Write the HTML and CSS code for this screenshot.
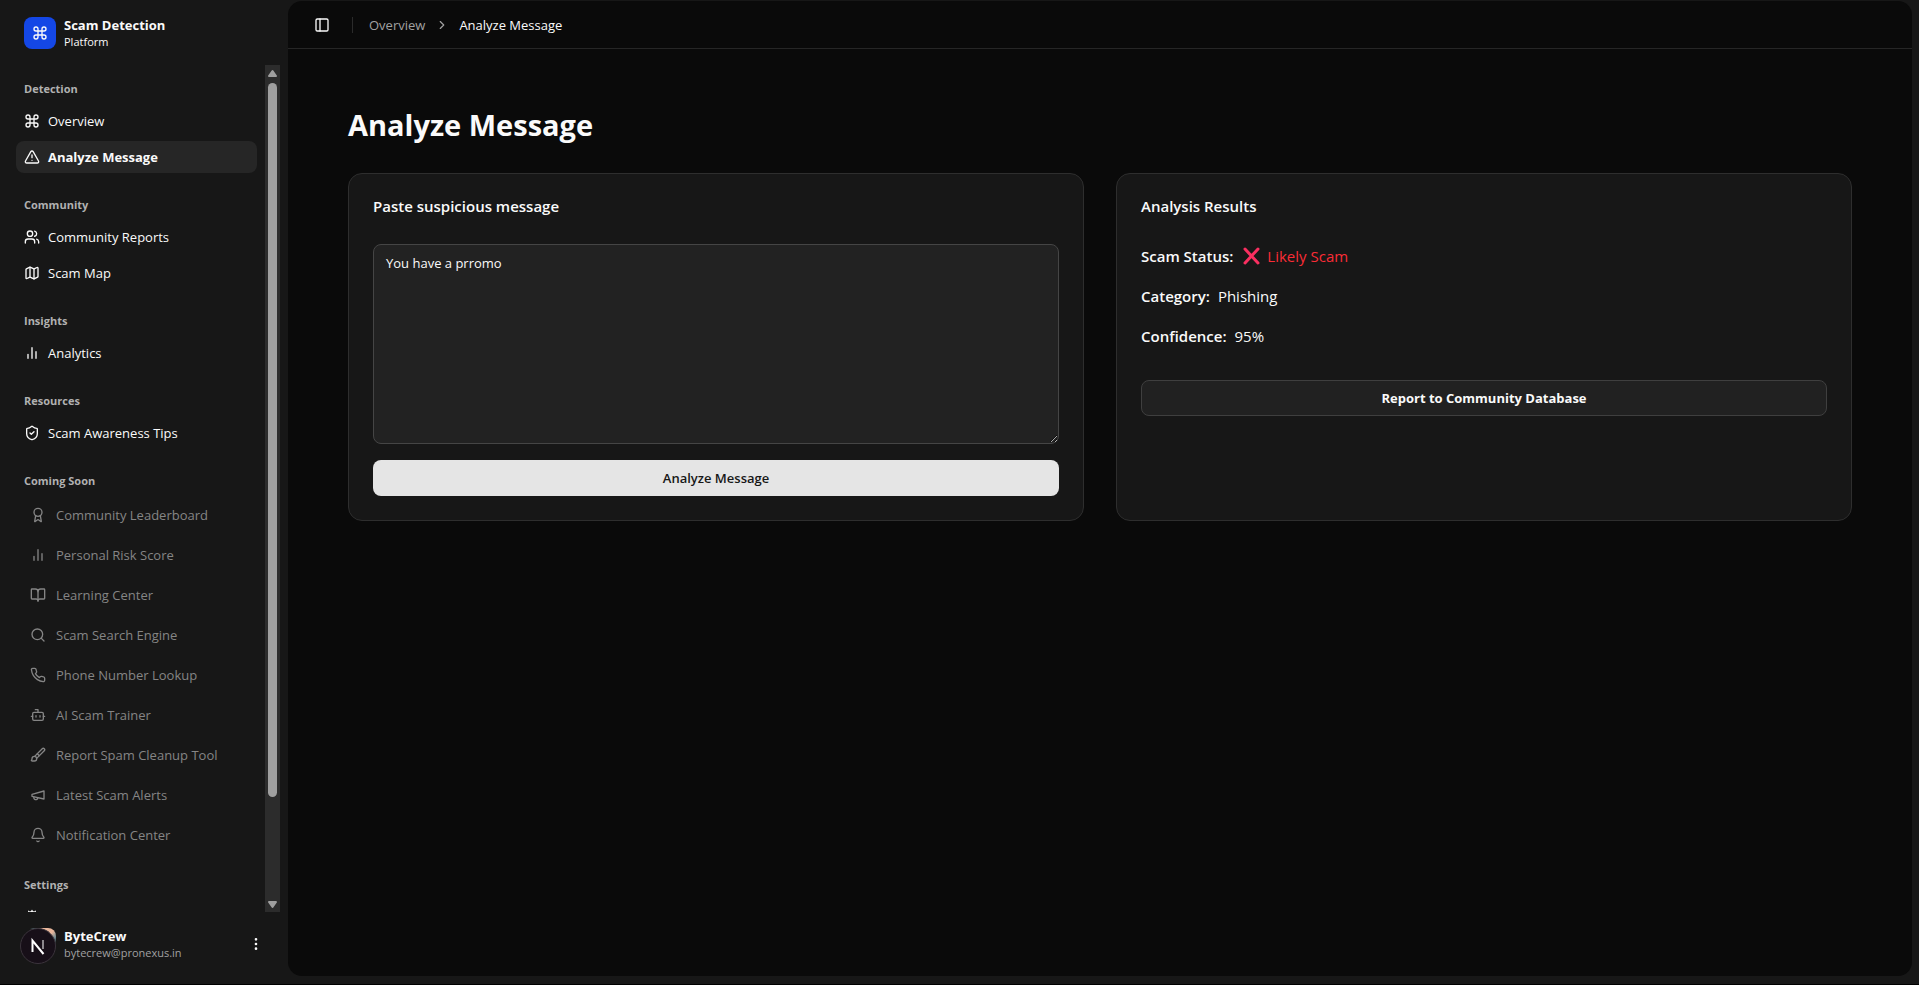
FILE: index.html
```html
<!DOCTYPE html>
<html lang="en">
<head>
<meta charset="utf-8">
<title>Analyze Message - Scam Detection Platform</title>
<link rel="stylesheet" href="styles.css">
</head>
<body>
<svg class="sprite" aria-hidden="true">
  <symbol id="command" viewBox="0 0 24 24"><path d="M15 6v12a3 3 0 1 0 3-3H6a3 3 0 1 0 3 3V6a3 3 0 1 0-3 3h12a3 3 0 1 0-3-3"/></symbol>
  <symbol id="alert" viewBox="0 0 24 24"><path d="m21.73 18-8-14a2 2 0 0 0-3.48 0l-8 14A2 2 0 0 0 4 21h16a2 2 0 0 0 1.73-3"/><path d="M12 9v4M12 17h.01"/></symbol>
  <symbol id="users" viewBox="0 0 24 24"><path d="M16 21v-2a4 4 0 0 0-4-4H6a4 4 0 0 0-4 4v2"/><circle cx="9" cy="7" r="4"/><path d="M22 21v-2a4 4 0 0 0-3-3.870M16 3.130a4 4 0 0 1 0 7.750"/></symbol>
  <symbol id="map" viewBox="0 0 24 24"><path d="M14.106 5.553a2 2 0 0 0 1.788 0l3.659-1.83A1 1 0 0 1 21 4.619v12.764a1 1 0 0 1-.553.894l-4.553 2.277a2 2 0 0 1-1.788 0l-4.212-2.106a2 2 0 0 0-1.788 0l-3.659 1.83A1 1 0 0 1 3 19.381V6.618a1 1 0 0 1 .553-.894l4.553-2.277a2 2 0 0 1 1.788 0z"/><path d="M15 5.764v15M9 3.236v15"/></symbol>
  <symbol id="bars" viewBox="0 0 24 24"><path d="M6 20v-6M12 20V4M18 20v-10"/></symbol>
  <symbol id="shield" viewBox="0 0 24 24"><path d="M20 13c0 5-3.5 7.500-7.660 8.950a1 1 0 0 1-.67-.01C7.500 20.500 4 18 4 13V6a1 1 0 0 1 1-1c2 0 4.500-1.200 6.240-2.720a1.170 1.170 0 0 1 1.520 0C14.510 3.810 17 5 19 5a1 1 0 0 1 1 1z"/><path d="m9 12 2 2 4-4"/></symbol>
  <symbol id="award" viewBox="0 0 24 24"><path d="m15.477 12.890 1.515 8.526a.5.5 0 0 1-.810.470l-3.580-2.687a1 1 0 0 0-1.197 0l-3.586 2.686a.5.5 0 0 1-.810-.469l1.514-8.526"/><circle cx="12" cy="8" r="6"/></symbol>
  <symbol id="book" viewBox="0 0 24 24"><path d="M12 7v14"/><path d="M3 18a1 1 0 0 1-1-1V4a1 1 0 0 1 1-1h5a4 4 0 0 1 4 4 4 4 0 0 1 4-4h5a1 1 0 0 1 1 1v13a1 1 0 0 1-1 1h-6a3 3 0 0 0-3 3 3 3 0 0 0-3-3z"/></symbol>
  <symbol id="search" viewBox="0 0 24 24"><circle cx="11" cy="11" r="8"/><path d="m21 21-4.300-4.300"/></symbol>
  <symbol id="phone" viewBox="0 0 24 24"><path d="M22 16.920v3a2 2 0 0 1-2.180 2 19.790 19.790 0 0 1-8.630-3.070 19.500 19.500 0 0 1-6-6 19.790 19.790 0 0 1-3.070-8.670A2 2 0 0 1 4.110 2h3a2 2 0 0 1 2 1.720 12.840 12.840 0 0 0 .7 2.810 2 2 0 0 1-.45 2.110L8.090 9.910a16 16 0 0 0 6 6l1.270-1.270a2 2 0 0 1 2.110-.45 12.840 12.840 0 0 0 2.810.7A2 2 0 0 1 22 16.920z"/></symbol>
  <symbol id="bot" viewBox="0 0 24 24"><path d="M12 8V4H8"/><rect width="16" height="12" x="4" y="8" rx="2"/><path d="M2 14h2M20 14h2M15 13v2M9 13v2"/></symbol>
  <symbol id="brush" viewBox="0 0 24 24"><path d="m11 10 3 3"/><path d="M6.500 21A3.500 3.500 0 1 0 3 17.500a2.620 2.620 0 0 1-.708 1.792A1 1 0 0 0 3 21z"/><path d="M9.969 17.031 21.378 5.624a1 1 0 0 0-3.002-3.002L6.967 14.031"/></symbol>
  <symbol id="megaphone" viewBox="0 0 24 24"><path d="m3 11 18-5v12L3 14z"/><path d="M11.600 16.800a3 3 0 1 1-5.800-1.600"/></symbol>
  <symbol id="bell" viewBox="0 0 24 24"><path d="M10.268 21a2 2 0 0 0 3.464 0"/><path d="M3.262 15.326A1 1 0 0 0 4 17h16a1 1 0 0 0 .740-1.673C19.410 13.956 18 12.499 18 8A6 6 0 0 0 6 8c0 4.499-1.411 5.956-2.738 7.326"/></symbol>
  <symbol id="gear" viewBox="0 0 24 24"><path d="M12 20a8 8 0 1 0 0-16 8 8 0 0 0 0 16z"/><path d="M12 14a2 2 0 1 0 0-4 2 2 0 0 0 0 4zM12 2v2M12 22v-2M17 20.660l-1-1.730M11 10.270 7 3.340M20.660 17l-1.730-1M3.340 7l1.730 1M14 12h8M2 12h2M20.660 7l-1.730 1M3.340 17l1.730-1M17 3.340l-1 1.730M11 13.730l-4 6.930"/></symbol>
  <symbol id="panel" viewBox="0 0 24 24"><rect width="18" height="18" x="3" y="3" rx="2"/><path d="M9 3v18"/></symbol>
  <symbol id="chevron" viewBox="0 0 24 24"><path d="m9 18 6-6-6-6"/></symbol>
  <symbol id="dots" viewBox="0 0 24 24"><circle cx="12" cy="12" r="1"/><circle cx="12" cy="5" r="1"/><circle cx="12" cy="19" r="1"/></symbol>
</svg>
<div class="app">
  <aside class="sidebar">
    <a class="brand" href="#">
      <span class="brand-mark"><svg class="icon"><use href="#command"/></svg></span>
      <span class="stack"><strong>Scam Detection</strong><small>Platform</small></span>
    </a>
    <div class="scroller">
      <nav class="nav">
        <section class="group">
          <h2>Detection</h2>
          <a class="item" href="#"><svg class="icon"><use href="#command"/></svg>Overview</a>
          <a class="item active" href="#" aria-current="page"><svg class="icon"><use href="#alert"/></svg>Analyze Message</a>
        </section>
        <section class="group">
          <h2>Community</h2>
          <a class="item" href="#"><svg class="icon"><use href="#users"/></svg>Community Reports</a>
          <a class="item" href="#"><svg class="icon"><use href="#map"/></svg>Scam Map</a>
        </section>
        <section class="group">
          <h2>Insights</h2>
          <a class="item" href="#"><svg class="icon"><use href="#bars"/></svg>Analytics</a>
        </section>
        <section class="group">
          <h2>Resources</h2>
          <a class="item" href="#"><svg class="icon"><use href="#shield"/></svg>Scam Awareness Tips</a>
        </section>
        <section class="group">
          <h2>Coming Soon</h2>
          <button class="item soon" disabled><svg class="icon"><use href="#award"/></svg>Community Leaderboard</button>
          <button class="item soon" disabled><svg class="icon"><use href="#bars"/></svg>Personal Risk Score</button>
          <button class="item soon" disabled><svg class="icon"><use href="#book"/></svg>Learning Center</button>
          <button class="item soon" disabled><svg class="icon"><use href="#search"/></svg>Scam Search Engine</button>
          <button class="item soon" disabled><svg class="icon"><use href="#phone"/></svg>Phone Number Lookup</button>
          <button class="item soon" disabled><svg class="icon"><use href="#bot"/></svg>AI Scam Trainer</button>
          <button class="item soon" disabled><svg class="icon"><use href="#brush"/></svg>Report Spam Cleanup Tool</button>
          <button class="item soon" disabled><svg class="icon"><use href="#megaphone"/></svg>Latest Scam Alerts</button>
          <button class="item soon" disabled><svg class="icon"><use href="#bell"/></svg>Notification Center</button>
        </section>
        <section class="group">
          <h2>Settings</h2>
          <a class="item" href="#" aria-label="Settings"><svg class="icon"><use href="#gear"/></svg></a>
        </section>
      </nav>
      <div class="scrollbar" aria-hidden="true">
        <svg class="arrow" viewBox="0 0 15 18"><path d="M7.500 6 11 11H4z"/></svg>
        <div class="track"><div class="thumb"></div></div>
        <svg class="arrow" viewBox="0 0 15 18"><path d="M7.500 13 11 8H4z"/></svg>
      </div>
    </div>
    <div class="user">
      <span class="avatar">
        <svg class="badge" viewBox="0 0 36 36"><circle cx="18" cy="18" r="17.500"/><path class="n-main" d="M12.500 24V12.500L23.500 26"/><path class="n-side" d="M23 12v9"/></svg>
      </span>
      <span class="stack"><strong>ByteCrew</strong><small class="muted">bytecrew@pronexus.in</small></span>
      <button class="more" aria-label="Account options"><svg class="icon"><use href="#dots"/></svg></button>
    </div>
  </aside>
  <main class="main">
    <header class="topbar">
      <button class="toggle" aria-label="Toggle sidebar"><svg class="icon"><use href="#panel"/></svg></button>
      <span class="divider"></span>
      <nav class="crumbs" aria-label="Breadcrumb">
        <a href="#">Overview</a>
        <svg class="icon"><use href="#chevron"/></svg>
        <span>Analyze Message</span>
      </nav>
    </header>
    <div class="content">
      <h1>Analyze Message</h1>
      <div class="cards">
        <section class="card">
          <label class="card-title" for="message">Paste suspicious message</label>
          <textarea id="message" spellcheck="false">You have a prromo</textarea>
          <button class="btn primary">Analyze Message</button>
        </section>
        <section class="card">
          <h2 class="card-title">Analysis Results</h2>
          <dl class="results">
            <div><dt>Scam Status:</dt><dd class="danger"><svg class="cross" viewBox="0 0 20 20"><path d="m4 3 13 14M17 3 4 17"/></svg>Likely Scam</dd></div>
            <div><dt>Category:</dt><dd>Phishing</dd></div>
            <div><dt>Confidence:</dt><dd>95%</dd></div>
          </dl>
          <button class="btn outline">Report to Community Database</button>
        </section>
      </div>
    </div>
  </main>
</div>
</body>
</html>
```
FILE: styles.css
```css
* { box-sizing: border-box; }
body, h1, h2, dl, dd { margin: 0; }
html { background: #000; }
body { font-family: "Open Sans", "Noto Sans", sans-serif; font-size: 13px; line-height: 20px; color: #fafafa; }
button, textarea { font: inherit; color: inherit; }
button { background: none; border: 0; padding: 0; }
a { color: inherit; text-decoration: none; }
.sprite { display: none; }
.icon { width: 16px; height: 16px; flex: none; fill: none; stroke: currentColor; stroke-width: 2; stroke-linecap: round; stroke-linejoin: round; }

.app { display: flex; height: calc(100vh - 1px); background: #171717; overflow: hidden; }
.sidebar { width: 288px; flex: none; display: flex; flex-direction: column; gap: 8px; padding: 9px 8px 16px; }

.brand, .user { display: flex; align-items: center; gap: 8px; height: 48px; margin: 0 8px; padding: 0 8px; }
.brand-mark { display: grid; place-items: center; width: 32px; height: 32px; border-radius: 8px; background: #1447e6; }
.stack { display: flex; flex-direction: column; flex: 1; line-height: 18px; }
.stack strong { font-weight: 700; }
.stack small { font-size: 11px; line-height: 16px; }
.stack .muted { color: #a1a1a1; }

.scroller { flex: 1; min-height: 0; display: flex; }
.nav { flex: 1; overflow: hidden; }
.group { display: flex; flex-direction: column; gap: 4px; padding: 8px; }
.group h2 { margin-bottom: -4px; padding: 0 8px; font-size: 11px; line-height: 32px; font-weight: 700; color: #b1b1b1; }
.item { display: flex; align-items: center; gap: 8px; height: 32px; flex: none; padding: 0 8px; border-radius: 8px; }
.active { background: #262626; font-weight: 700; }
.soon { height: 36px; gap: 10px; padding: 0 14px; color: #858585; font-weight: 500; }

.scrollbar { width: 15px; display: flex; flex-direction: column; background: #2c2c2c; }
.arrow { width: 15px; height: 18px; fill: #9f9f9f; stroke: #9f9f9f; stroke-width: 2; stroke-linejoin: round; }
.track { flex: 1; padding: 0 3px; }
.thumb { height: 88%; border-radius: 5px; background: #9f9f9f; }

.avatar { position: relative; width: 32px; height: 32px; border-radius: 8px; background: radial-gradient(circle at 75% 0, #e9b79c 15%, #6d8a91 30%, #171717 45%); }
.badge { position: absolute; top: 0; left: -4px; width: 36px; height: 36px; fill: #170f18; stroke: #3b343c; }
.badge path { fill: none; stroke: #fff; stroke-width: 2; }
.badge .n-side { stroke: #8b878c; }
.more { display: grid; place-items: center; }

.main { flex: 1; min-width: 0; margin: 1px 7px 8px 0; border-radius: 14px; background: #0a0a0a; }
.topbar { display: flex; align-items: center; height: 48px; padding-left: 20px; border-bottom: 1px solid #262626; }
.toggle { display: grid; place-items: center; width: 28px; height: 28px; }
.divider { width: 1px; height: 16px; margin: 0 16px; background: #2b2b2b; }
.crumbs { display: flex; align-items: center; gap: 10px; }
.crumbs a, .crumbs .icon { color: #a1a1a1; }
.crumbs .icon { width: 14px; height: 14px; }

.content { padding: 60px; }
h1 { font-size: 29px; line-height: 32px; font-weight: 700; margin-bottom: 32px; }
.cards { display: grid; grid-template-columns: 1fr 1fr; gap: 32px; }
.card { display: flex; flex-direction: column; padding: 24px; border: 1px solid #2e2e2e; border-radius: 14px; background: #171717; }
.card-title { margin-bottom: 30px; font-size: 15px; line-height: 16px; font-weight: 600; }
textarea { display: block; height: 200px; padding: 8px 12px; border: 1px solid #454545; border-radius: 8px; background: #222; resize: vertical; outline: 0; }
.btn { height: 36px; border-radius: 8px; font-weight: 600; }
.primary { margin-top: 16px; background: #e5e5e5; color: #171717; }
.outline { margin-top: 32px; border: 1px solid #3f3f3f; background: #212121; font-weight: 700; }
.results { display: flex; flex-direction: column; gap: 16px; font-size: 15px; line-height: 24px; }
.results div { display: flex; align-items: center; gap: 8px; }
.results dd { display: flex; align-items: center; gap: 6px; }
.results dt { font-weight: 600; }
.danger { color: #fb2c36; }
.cross { width: 20px; height: 20px; fill: none; stroke: #f92f60; stroke-width: 3; stroke-linecap: round; }
```
